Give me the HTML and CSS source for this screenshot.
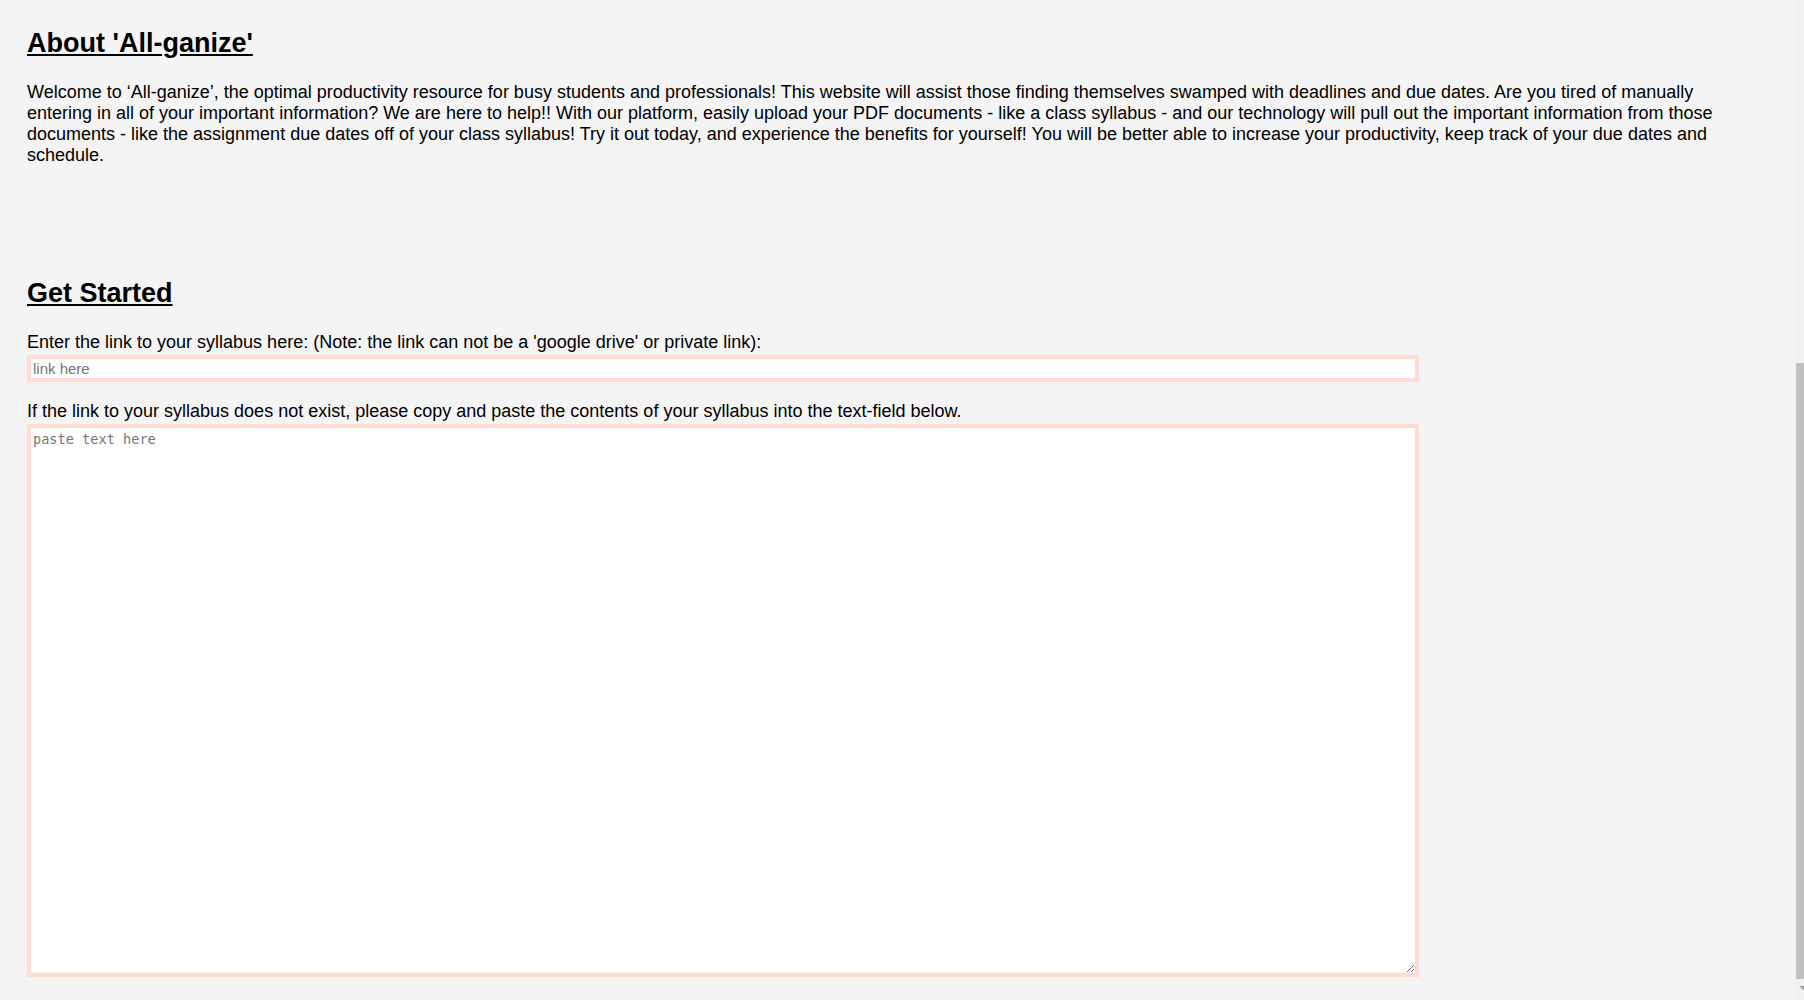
FILE: index.html
```html
<!DOCTYPE html>
<html lang="en">
<head>
<meta charset="utf-8">
<title>All-ganize</title>
<link rel="stylesheet" href="styles.css">
</head>
<body>
<main class="page">
  <section class="about">
    <h2 class="title">About 'All-ganize'</h2>
    <p class="intro">Welcome to ‘All-ganize’, the optimal productivity resource for busy students and professionals! This website will assist those finding themselves swamped with deadlines and due dates. Are you tired of manually entering in all of your important information? We are here to help!! With our platform, easily upload your PDF documents - like a class syllabus - and our technology will pull out the important information from those documents - like the assignment due dates off of your class syllabus! Try it out today, and experience the benefits for yourself! You will be better able to increase your productivity, keep track of your due dates and schedule.</p>
  </section>
  <section class="start">
    <h2 class="title">Get Started</h2>
    <label class="field-label" for="link">Enter the link to your syllabus here: (Note: the link can not be a 'google drive' or private link):</label>
    <input class="link-input" id="link" type="text" placeholder="link here">
    <label class="field-label field-label-gap" for="text">If the link to your syllabus does not exist, please copy and paste the contents of your syllabus into the text-field below.</label>
    <textarea class="text-input" id="text" placeholder="paste text here"></textarea>
  </section>
</main>
<div class="scrollbar" aria-hidden="true"><div class="scrollbar-thumb"></div><div class="scrollbar-arrow"></div></div>
</body>
</html>
```

FILE: styles.css
```css
html, body {
  margin: 0;
  padding: 0;
  background: #f4f4f4;
}

body {
  font-family: "Liberation Sans", Arial, sans-serif;
  font-size: 18px;
  color: #000;
  overflow: hidden;
}

.page {
  padding: 28px 0 0 27px;
  width: 1735px;
}

.title {
  margin: 0 0 23px;
  font-size: 27px;
  line-height: 31px;
  font-weight: bold;
  text-decoration: underline;
}

.intro {
  margin: 0;
  line-height: 21px;
}

.start {
  margin-top: 112px;
  display: flex;
  flex-direction: column;
  align-items: flex-start;
}

.field-label {
  display: block;
  line-height: 21px;
}

.field-label-gap {
  margin-top: 19px;
}

.link-input {
  margin: 2px 0 0;
  box-sizing: border-box;
  width: 1392px;
  height: 27px;
  padding: 1px 2px;
  border: 4px solid #ffdcd2;
  background: #fff;
  font-family: "Liberation Sans", Arial, sans-serif;
  font-size: 15px;
  outline: none;
}

.link-input::placeholder {
  color: #757575;
}

.text-input {
  margin: 2px 0 0;
  box-sizing: border-box;
  width: 1392px;
  height: 553px;
  padding: 3px 2px 2px;
  border: 4px solid #ffdcd2;
  background: #fff;
  font-family: "DejaVu Sans Mono", "Liberation Mono", monospace;
  font-size: 13.6px;
  outline: none;
}

.text-input::placeholder {
  color: #757575;
}

.scrollbar {
  position: fixed;
  top: 0;
  right: 0;
  width: 10px;
  height: 100%;
  background: #f1f1f1;
}

.scrollbar-thumb {
  position: absolute;
  top: 363px;
  left: 2px;
  right: 0;
  height: 616px;
  background: #c1c1c1;
}

.scrollbar-arrow {
  position: absolute;
  top: 986px;
  left: 5px;
  width: 0;
  height: 0;
  border-left: 4px solid transparent;
  border-right: 4px solid transparent;
  border-top: 4px solid #a3a3a3;
}
```
